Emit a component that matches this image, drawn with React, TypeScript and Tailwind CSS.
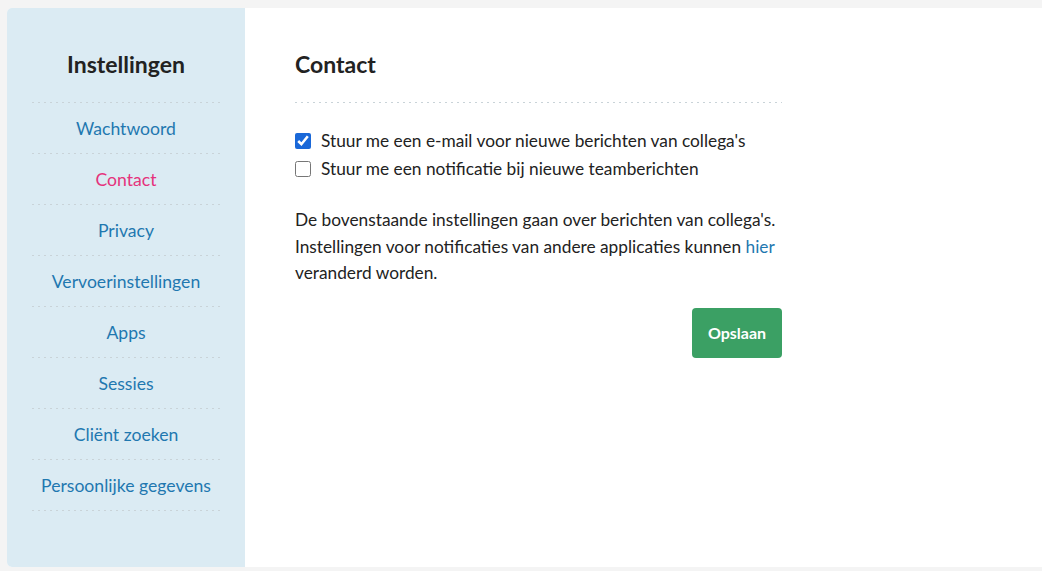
import { useState } from 'react';

const items = [
  'Wachtwoord',
  'Contact',
  'Privacy',
  'Vervoerinstellingen',
  'Apps',
  'Sessies',
  'Cliënt zoeken',
  'Persoonlijke gegevens',
];

const dots =
  'h-px bg-[repeating-linear-gradient(to_right,#c9d3d8_0,#c9d3d8_2px,transparent_2px,transparent_6px)]';

const Sidebar = () => {
  return (
    <aside className="w-[238px] shrink-0 bg-[#dbebf3] rounded-l-[5px] px-[25px] pt-[41px]">
      <h2 className="text-center text-[23px] leading-[30px] font-bold text-[#222] mb-[23px]">
        Instellingen
      </h2>
      <div className={dots} />
      {items.map((item) => (
        <div key={item}>
          <a
            href="#"
            className={
              'flex h-[50px] items-center justify-center pt-[2px] text-[17.6px] ' +
              (item === 'Contact' ? 'text-[#e5327c]' : 'text-[#1f78b0]')
            }
          >
            {item}
          </a>
          <div className={dots} />
        </div>
      ))}
    </aside>
  );
};

const App = () => {
  const [email, setEmail] = useState(true);
  const [notify, setNotify] = useState(false);

  return (
    <div
      className="min-h-[571px] bg-[#f4f4f4] pt-2 pl-[7px] pb-1"
      style={{ fontFamily: 'Lato, "Open Sans", sans-serif' }}
    >
      <div className="flex h-[559px] bg-white rounded-l-[5px]">
        <Sidebar />
        <main className="pl-[50px] pt-[41px]">
          <div className="w-[487px]">
            <h1 className="text-[23px] leading-[30px] font-bold text-[#222] mb-[23px]">
              Contact
            </h1>
            <div className={dots} />
            <div className="mt-[24px] flex flex-col text-[17.3px] text-[#222]">
              <label className="flex h-[28px] items-center gap-[10px]">
                <input
                  type="checkbox"
                  checked={email}
                  onChange={() => setEmail(!email)}
                  className="w-4 h-4 m-0 accent-[#1a68d8]"
                />
                Stuur me een e-mail voor nieuwe berichten van collega's
              </label>
              <label className="flex h-[28px] items-center gap-[10px]">
                <input
                  type="checkbox"
                  checked={notify}
                  onChange={() => setNotify(!notify)}
                  className="w-4 h-4 m-0 accent-[#1a68d8]"
                />
                Stuur me een notificatie bij nieuwe teamberichten
              </label>
            </div>
            <p className="mt-[24px] text-[17.3px] leading-[26.5px] text-[#222]">
              De bovenstaande instellingen gaan over berichten van collega's. Instellingen voor
              notificaties van andere applicaties kunnen{' '}
              <a href="#" className="text-[#1f78b0]">
                hier
              </a>{' '}
              veranderd worden.
            </p>
            <div className="flex justify-end mt-[21px]">
              <button className="w-[90px] h-[50px] rounded-[4px] bg-[#3ba064] text-white text-[16px] font-bold">
                Opslaan
              </button>
            </div>
          </div>
        </main>
      </div>
    </div>
  );
};

export default App;
